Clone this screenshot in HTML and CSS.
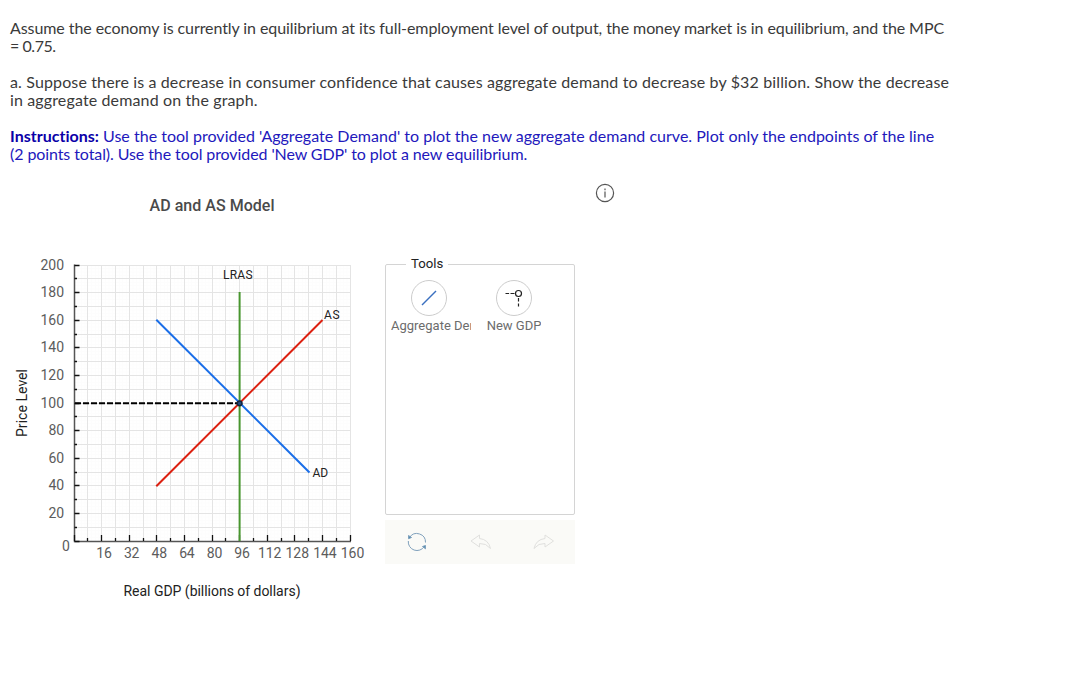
FILE: index.html
```html
<!DOCTYPE html>
<html lang="en">
<head>
  <meta charset="UTF-8">
  <title>AD and AS Model</title>
  <meta name="viewport" content="width=device-width, initial-scale=1.0">
  <link rel="stylesheet" href="styles.css">
</head>
<body>

  <div class="question">
    <p class="intro">Assume the economy is currently in equilibrium at its full-employment level of output, the money market is in equilibrium, and the MPC<br><span class="mpc">= 0.75.</span></p>
    <p class="part">a. Suppose there is a decrease in consumer confidence that causes aggregate demand to decrease by $32 billion. Show the decrease<br>in aggregate demand on the graph.</p>
    <p class="instructions"><b>Instructions:</b> Use the tool provided 'Aggregate Demand' to plot the new aggregate demand curve. Plot only the endpoints of the line<br><span class="points">(2 points total). Use the tool provided 'New GDP' to plot a new equilibrium.</span></p>
  </div>

  <div class="workspace">
    <svg class="chart" width="385" height="430" viewBox="0 180 385 430">
      <text class="title" x="149.5" y="211" textLength="125">AD and AS Model</text>

      <!-- grid -->
      <path class="grid-minor" id="gridMinor"/>
      <path class="grid" id="grid"/>

      <!-- axes -->
      <path class="axis" d="M74.5 264.5V541.5H351"/>
      <path class="tick" id="ticks"/>
      <g id="labels"></g>
      <text class="num" x="62" y="551">0</text>

      <!-- curves -->
      <path class="lras" d="M239.6 292V541"/>
      <path class="as" d="M156.3 486.3L322.5 320"/>
      <path class="ad" d="M156.3 319.7L309.5 472.5"/>
      <path class="dash" d="M75 403.2H240"/>
      <circle class="point" cx="239.6" cy="403.3" r="2.4"/>
      <text class="name" x="223" y="279" textLength="29.5">LRAS</text>
      <text class="name" x="324" y="319" textLength="15.5">AS</text>
      <text class="name" x="312.5" y="477" textLength="15.5">AD</text>

      <text class="axis-title" x="123.5" y="596" textLength="177">Real GDP (billions of dollars)</text>
      <text class="axis-title" transform="translate(27 437) rotate(-90)" textLength="68">Price Level</text>
    </svg>

    <div class="side">
      <fieldset class="tools">
        <legend>Tools</legend>
        <div class="tool">
          <svg width="36" height="36" viewBox="0 0 36 36">
            <circle class="ring" cx="18" cy="18" r="17.5"/>
            <path class="tool-line" d="M11 25L25 11"/>
          </svg>
          <span class="tool-label wide">Aggregate Demand</span>
        </div>
        <div class="tool">
          <svg width="36" height="36" viewBox="0 0 36 36">
            <circle class="ring" cx="18" cy="18" r="17.5"/>
            <path class="tool-gdp" d="M9.5 13.5h3.6m1.4 0h4M22.5 18v3.400m0 2v3"/>
            <circle class="tool-gdp-point" cx="22.5" cy="13.5" r="3"/>
          </svg>
          <span class="tool-label">New GDP</span>
        </div>
      </fieldset>
      <div class="toolbar">
        <svg width="22" height="22" viewBox="0 0 22 22">
          <g class="reset">
            <path d="M3.5 6.5A8.7 8.7 0 0 1 19.500 11.5M18.3 15.5A8.7 8.7 0 0 1 2.3 10"/>
            <path class="reset-head" d="M2.500 4.500L5.500 6.500L2.500 7.700ZM19.500 17.800L16.500 15.500L19.500 14.500Z"/>
          </g>
        </svg>
        <svg width="22" height="22" viewBox="0 0 22 22">
          <path class="arrow" d="M10.5 4L2 10L10.500 16V12.500Q17 12 21.500 17.500Q19.500 8.500 10.500 7.500Z"/>
        </svg>
        <svg width="22" height="22" viewBox="0 0 22 22">
          <path class="arrow" d="M13 4L21.500 10L13 16V12.500Q6.500 12 2 17.500Q4 8.500 13 7.500Z"/>
        </svg>
      </div>
    </div>

    <svg class="info" width="20" height="20" viewBox="0 0 20 20">
      <circle cx="10" cy="10" r="8.6"/>
      <path d="M10 8.500V14.500M10 5.400V7.200"/>
    </svg>
  </div>

  <script>
    // 0-160 across, 0-200 up, one grid line every 8 / 10 units
    const left = 74.5, right = 350.5, top_ = 265, bottom = 541;
    const step = (right - left) / 20;
    let minor = "", grid = "", ticks = "", labels = "";

    for (let i = 0; i <= 20; i++) {
      const x = Math.floor(left + i * step - 0.5) + 0.5;
      const y = Math.floor(bottom - i * step) + 0.5;
      grid += `M${x} ${top_}V${bottom}M${left} ${y}H${right}`;
      if (i < 20) {
        for (let k = 1; k < 4; k++) {
          const d = k * step / 4;
          minor += `M${left + i * step + d} ${top_}V${bottom}M${left} ${bottom - i * step - d}H${right}`;
        }
      }
      const big = i % 2 === 0;
      ticks += `M${x} ${bottom}v${big ? -6 : -3}M${left} ${y}h${big ? 5 : 2.5}`;
      if (big && i > 0) {
        const xv = i * 8, yv = i * 10;
        const xw = xv > 99 ? 23.5 : 15.5, yw = yv > 99 ? 23.5 : 15.5;
        const cx = left + i * step + 2;
        labels += `<text class="num" x="${cx - xw / 2}" y="558" textLength="${xw}">${xv}</text>`;
        labels += `<text class="num" x="${64 - yw}" y="${y + 4.5}" textLength="${yw}">${yv}</text>`;
      }
    }

    document.getElementById("gridMinor").setAttribute("d", minor);
    document.getElementById("grid").setAttribute("d", grid);
    document.getElementById("ticks").setAttribute("d", ticks);
    document.getElementById("labels").innerHTML = labels;
  </script>

</body>
</html>
```

FILE: styles.css
```css
body {
  margin: 0;
  background: #fff;
  color: #3a3a3a;
  font-family: Roboto, sans-serif;
}
.question {
  padding: 19px 10px 0;
  font-family: Lato, sans-serif;
  font-size: 16px;
  line-height: 18px;
  white-space: nowrap;
}
.question p {
  margin: 0 0 18px;
}
.intro {
  letter-spacing: -0.08px;
}
.mpc {
  letter-spacing: -0.45px;
}
.part {
  letter-spacing: 0.135px;
}
.instructions {
  color: #2218bc;
  letter-spacing: 0.015px;
}
.instructions b {
  color: #0a00a8;
}
.points {
  letter-spacing: -0.09px;
}
.workspace {
  display: flex;
  align-items: flex-start;
  margin-top: -1px;
}
.chart {
  flex: none;
}
text {
  white-space: pre;
}
.title {
  font-size: 16px;
  font-weight: 500;
  fill: #4a4a4a;
}
.num {
  font-size: 14px;
  fill: #5c5c5c;
}
.name {
  font-size: 12px;
  fill: #222;
}
.axis-title {
  font-size: 14px;
  fill: #222;
}
path {
  fill: none;
}
.grid-minor {
  stroke: #fdfdfd;
}
.grid {
  stroke: #e4e4e4;
}
.axis {
  stroke: #555;
  stroke-width: 1.5;
}
.tick {
  stroke: #111;
  stroke-width: 1.3;
}
.lras {
  stroke: #48962f;
  stroke-width: 2;
}
.as {
  stroke: #dc2010;
  stroke-width: 2;
}
.ad {
  stroke: #1a6ee8;
  stroke-width: 2;
}
.dash {
  stroke: #000;
  stroke-width: 2;
  stroke-dasharray: 6 2;
}
.point {
  fill: #234a80;
  stroke: #15253c;
  stroke-width: 1.5;
}
.side {
  width: 190px;
  padding-top: 76px;
}
.tools {
  display: flex;
  gap: 5px;
  box-sizing: border-box;
  height: 259px;
  margin: 0;
  padding: 8px 0 0 3px;
  border: 1px solid #d4d4d4;
  border-radius: 2px;
}
.tools legend {
  margin-left: 17px;
  padding: 0 5px;
  font-size: 13.2px;
  line-height: 16px;
  color: #222;
}
.tool {
  display: flex;
  flex-direction: column;
  align-items: center;
  width: 80px;
}
.tool svg {
  flex: none;
}
.tool-label {
  max-width: 80px;
  margin-top: 2px;
  overflow: hidden;
  white-space: nowrap;
  font-size: 13px;
  line-height: 16px;
  color: #6c6c6c;
}
.tool-label.wide {
  margin-left: 4px;
}
.ring {
  fill: #fff;
  stroke: #ccc;
}
.tool-line {
  stroke: #3b70c0;
  stroke-width: 1.5;
}
.tool-gdp, .tool-gdp-point {
  fill: none;
  stroke: #222;
  stroke-width: 1.2;
}
.toolbar {
  display: flex;
  justify-content: space-around;
  align-items: center;
  height: 44px;
  margin-top: 5px;
  background: #fafaf7;
}
.reset {
  stroke: #7fa0bc;
}
.reset-head {
  fill: #4a8ab0;
}
.arrow {
  stroke: #e0e0de;
}
.info {
  margin: 3px 0 0 20px;
  fill: none;
  stroke: #555;
  stroke-width: 1.2;
}
```
